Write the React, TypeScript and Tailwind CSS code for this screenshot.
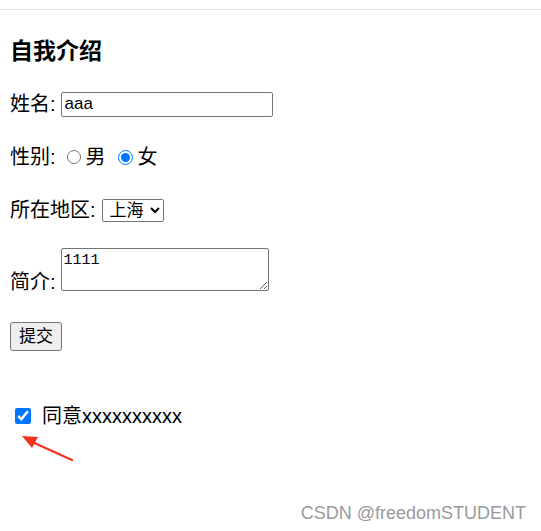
export default function App() {
  return (
    <div
      className="relative h-[531px] w-[541px] overflow-hidden bg-white text-[20px] text-black"
      style={{ fontFamily: '"Liberation Sans", "Noto Sans CJK SC", sans-serif' }}
    >
      <div className="h-[10px] border-b border-[#e3e3e3]" />
      <div className="px-[10px]">
        <h3 className="mt-[26px] h-[30px] text-[23px] font-bold leading-[30px]">自我介绍</h3>

        <div className="mt-[25px] flex h-[26px] items-center">
          <span>姓名:</span>
          <input
            defaultValue="aaa"
            className="ml-[5px] h-[25px] w-[212px] rounded-[2px] border border-[#767676] bg-white px-[3px] text-[17px] leading-none"
          />
        </div>

        <div className="mt-[27px] flex h-[26px] items-center">
          <span>性别:</span>
          <input type="radio" name="sex" className="ml-[11px] mr-[5px] h-[14px] w-[14px] accent-[#0075ff]" />
          <span>男</span>
          <input type="radio" name="sex" defaultChecked className="ml-[12px] mr-[5px] h-[15px] w-[15px] accent-[#0075ff]" />
          <span>女</span>
        </div>

        <div className="mt-[27px] flex h-[26px] items-center">
          <span>所在地区:</span>
          <select
            defaultValue="sh"
            className="ml-[6px] h-[23px] w-[62px] rounded-[2px] border border-[#767676] bg-white pl-[3px] text-[17px] leading-none"
          >
            <option value="bj">北京</option>
            <option value="sh">上海</option>
          </select>
        </div>

        <div className="mt-[25px] flex items-end">
          <span className="mb-[-3px] leading-[24px]">简介:</span>
          <textarea
            defaultValue="1111"
            className="ml-[5px] h-[43px] w-[208px] rounded-[2px] border border-[#767676] bg-white px-[2px] pt-[3px] text-[15px] leading-[18px]"
            style={{ fontFamily: '"Liberation Mono", "Noto Sans CJK SC", monospace' }}
          />
        </div>

        <button className="mt-[31px] flex h-[29px] w-[52px] items-center justify-center rounded-[3px] border border-[#767676] bg-[#efefef] text-[17px]">
          提交
        </button>

        <div className="mt-[53px] flex h-[24px] items-center">
          <input type="checkbox" defaultChecked className="ml-[5px] h-[16px] w-[16px] accent-[#0075ff]" />
          <span className="ml-[11px]">同意xxxxxxxxxx</span>
        </div>
      </div>

      <svg className="absolute left-[18px] top-[430px]" width="60" height="36" viewBox="0 0 60 36">
        <path d="M54 30 L12 11" stroke="#f0321e" strokeWidth="2.2" strokeLinecap="round" />
        <path d="M4 6 L20 7 L14 18 Z" fill="#f0321e" />
      </svg>

      <div className="absolute bottom-[7px] right-[15px] text-[18px] leading-[22px] text-[#9a9a9a]">
        CSDN @freedomSTUDENT
      </div>
    </div>
  )
}
